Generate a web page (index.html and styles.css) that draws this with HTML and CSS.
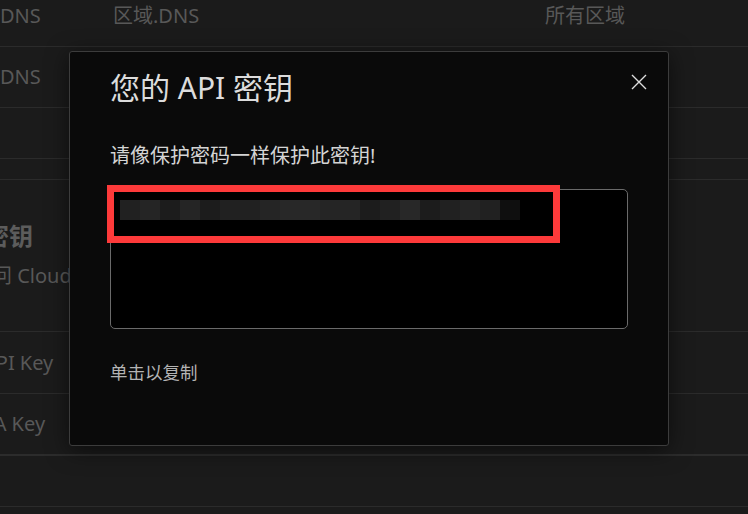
FILE: index.html
```html
<!DOCTYPE html>
<html lang="zh-CN">
<head>
<meta charset="utf-8">
<title>API 密钥</title>
<link rel="stylesheet" href="styles.css">
</head>
<body>
<div class="page">
  <div class="list">
    <div class="row row-tall">
      <span class="cell">DNS</span>
      <span class="cell">区域.DNS</span>
      <span class="cell">所有区域</span>
    </div>
    <div class="row row-tall">
      <span class="cell">DNS</span>
      <span class="cell"></span>
      <span class="cell"></span>
    </div>
    <div class="row row-short"></div>
    <div class="gap"></div>
    <div class="section">
      <div class="section-title cut-title">密钥</div>
      <div class="section-desc cut-desc">问 Cloudflare API</div>
    </div>
    <div class="row row-key">
      <span class="cell cut-api">API Key</span>
    </div>
    <div class="row row-key row-strong">
      <span class="cell cut-ca">CA Key</span>
    </div>
    <div class="row row-short"></div>
  </div>

  <div class="modal">
    <h2 class="modal-title">您的 API 密钥</h2>
    <p class="modal-sub">请像保护密码一样保护此密钥!</p>
    <div class="keybox">
      <div class="key-blur">
        <span class="b b2"></span><span class="b b3"></span><span class="b b1"></span><span class="b b3"></span>
        <span class="b b1"></span><span class="b b2"></span><span class="b b2"></span><span class="b b3"></span>
        <span class="b b4"></span><span class="b b4"></span><span class="b b3"></span><span class="b b3"></span>
        <span class="b b1"></span><span class="b b2"></span><span class="b b4"></span><span class="b b1"></span>
        <span class="b b2"></span><span class="b b3"></span><span class="b b2"></span><span class="b b0"></span>
      </div>
    </div>
    <p class="modal-copy">单击以复制</p>
    <button class="close" aria-label="关闭">
      <svg width="16" height="16" viewBox="0 0 16 16"><path d="M1 1 L15 15 M15 1 L1 15" stroke="#dedede" stroke-width="1.4" fill="none"/></svg>
    </button>
    <div class="highlight"></div>
  </div>
</div>
</body>
</html>
```

FILE: styles.css
```css
* { box-sizing: border-box; }
html, body { margin: 0; padding: 0; }
body {
  background: #1b1b1b;
  font-family: "Noto Sans", "Noto Sans CJK SC", sans-serif;
}
.page {
  position: relative;
  width: 748px;
  height: 514px;
  overflow: hidden;
  background: #1b1b1b;
}
.list {
  margin-top: -14px;
}
.row {
  display: grid;
  grid-template-columns: 113px 432px 1fr;
  align-items: center;
  border-bottom: 1px solid #2b2b2b;
  color: #585858;
  font-size: 20px;
  line-height: 28px;
  white-space: nowrap;
}
.row-tall { height: 61px; }
.row-key { height: 62px; }
.row-short { height: 51px; }
.row-strong { border-bottom: 2px solid #2c2c2c; }
.gap {
  height: 21px;
  border-bottom: 1px solid #2b2b2b;
}
.section {
  height: 152px;
  border-bottom: 1px solid #2b2b2b;
  padding-top: 40px;
  white-space: nowrap;
}
.section-title {
  font-size: 24px;
  line-height: 32px;
  font-weight: 700;
  color: #5c5c5c;
}
.section-desc {
  margin-top: 10px;
  font-size: 20px;
  line-height: 28px;
  color: #585858;
}
.cut-title { margin-left: -15px; }
.cut-desc { margin-left: -8px; }
.cut-api { margin-left: -17px; }
.cut-ca { margin-left: -19px; }

.modal {
  position: absolute;
  left: 69px;
  top: 51px;
  width: 600px;
  height: 395px;
  background: #0a0a0a;
  border: 1px solid #3c3c3c;
  border-radius: 3px;
  box-shadow: 0 4px 22px rgba(0, 0, 0, 0.55);
  padding: 16px 40px 0 40px;
  display: flex;
  flex-direction: column;
}
.modal-title {
  margin: 0;
  font-size: 30px;
  line-height: 40px;
  font-weight: 400;
  color: #dcdcdc;
}
.modal-sub {
  margin: 34px 0 0 0;
  font-size: 20px;
  line-height: 28px;
  color: #d4d4d4;
}
.keybox {
  margin-top: 19px;
  width: 518px;
  height: 140px;
  background: #000;
  border: 1px solid #6a6a6a;
  border-radius: 5px;
  padding: 10px 0 0 9px;
}
.key-blur {
  display: flex;
  height: 20px;
}
.b { width: 20px; height: 20px; }
.b0 { background: #0f0f0f; }
.b1 { background: #1c1c1c; }
.b2 { background: #212121; }
.b3 { background: #252525; }
.b4 { background: #282828; }
.modal-copy {
  margin: 31px 0 0 0;
  font-size: 17.5px;
  line-height: 24px;
  color: #b4b4b4;
}
.close {
  position: absolute;
  right: 21px;
  top: 22px;
  width: 16px;
  height: 16px;
  padding: 0;
  border: 0;
  background: transparent;
  display: flex;
}
.highlight {
  position: absolute;
  left: 37px;
  top: 133px;
  width: 453px;
  height: 58px;
  border: 7px solid #fd3a3a;
}
```
